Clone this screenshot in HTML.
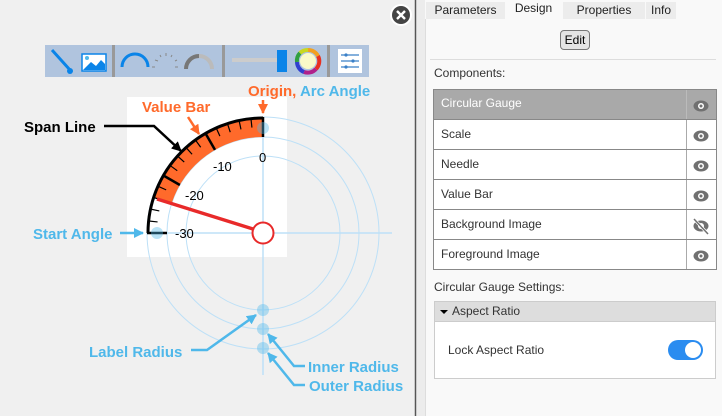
<!DOCTYPE html>
<html><head><meta charset="utf-8"><style>
*{margin:0;padding:0;box-sizing:border-box}
body{width:722px;height:416px;background:#f0f0f0;font-family:"Liberation Sans",Arial,sans-serif;position:relative;overflow:hidden}
.abs{position:absolute}
.tab{position:absolute;top:2px;height:17px;font-size:12px;color:#222;text-align:center;line-height:17px;background:#ececec}
.row{position:absolute;left:433px;width:284px;height:30px;border:1px solid #888;border-top:none;background:#fff;font-size:12px;color:#333}
.row span{position:absolute;left:7px;top:7px}
.row .e{position:absolute;left:252px;top:0;width:31px;height:29px;border-left:1px solid #aaa}
</style></head><body>
<svg class="abs" style="left:0;top:0" width="722" height="416">
<defs><marker id="ab" markerUnits="userSpaceOnUse" markerWidth="10" markerHeight="10" refX="9" refY="5" orient="auto"><path d="M0,0L10,5L0,10z" fill="#4fb8ea"/></marker>
<marker id="ao" markerUnits="userSpaceOnUse" markerWidth="10" markerHeight="10" refX="9" refY="5" orient="auto"><path d="M0,0L10,5L0,10z" fill="#ff6a2b"/></marker>
<marker id="ak" markerUnits="userSpaceOnUse" markerWidth="10" markerHeight="10" refX="9" refY="5" orient="auto"><path d="M0,0L10,5L0,10z" fill="#000"/></marker></defs>
<rect x="0" y="0" width="416" height="416" fill="#f0f0f0"/>
<line x1="415.5" y1="0" x2="415.5" y2="416" stroke="#555" stroke-width="1.5"/>
<rect x="417" y="0" width="8" height="416" fill="#ececec"/>
<rect x="425" y="0" width="297" height="416" fill="#f9f9f9"/>
<line x1="425.5" y1="19" x2="425.5" y2="416" stroke="#ddd"/>
<circle cx="401" cy="15" r="11" fill="#fff"/><circle cx="401" cy="15" r="9" fill="#444"/>
<path d="M397,11L405,19M405,11L397,19" stroke="#fff" stroke-width="2.4"/>
<rect x="45" y="45" width="324" height="32" fill="#b0c4de"/>
<rect x="112" y="45" width="3" height="32" fill="#999"/><rect x="222" y="45" width="3" height="32" fill="#999"/><rect x="327" y="45" width="3" height="32" fill="#999"/>
<path d="M52,50L70,70" stroke="#0a84e8" stroke-width="3"/><circle cx="70" cy="71" r="3" fill="#0a84e8"/>
<rect x="82" y="54" width="24" height="17" fill="#fff" stroke="#0a84e8" stroke-width="1.5"/><circle cx="87" cy="58" r="2" fill="#4fb8ea"/><path d="M83,70L91,62L96,66L101,60L105,64L105,70z" fill="#0a84e8"/>
<path d="M122,67A13,13 0 0 1 148,67" fill="none" stroke="#0a84e8" stroke-width="3"/>
<g stroke="#888" stroke-width="1"><path d="M152,67h3M155,60l3,1M160,55l1,2M166,53v3M172,55l-1,2M177,60l-2,1M178,67h-3"/></g>
<path d="M186,69A13,13 0 0 1 212,69" fill="none" stroke="#bbb" stroke-width="4"/><path d="M186,69A13,13 0 0 1 199,56" fill="none" stroke="#777" stroke-width="4"/>
<rect x="232" y="58" width="48" height="4" fill="#ccc"/><rect x="277" y="50" width="10" height="22" fill="#0a84e8"/>
<g stroke-width="4" fill="none"><path d="M308,50A11,11 0 0 1 318,56" stroke="#f3a020"/><path d="M318,56A11,11 0 0 1 316,69" stroke="#e83020"/><path d="M316,69A11,11 0 0 1 304,72" stroke="#b0208a"/><path d="M304,72A11,11 0 0 1 297,62" stroke="#3040d0"/><path d="M297,62A11,11 0 0 1 300,53" stroke="#30a040"/><path d="M300,53A11,11 0 0 1 308,50" stroke="#c8d820"/></g>
<circle cx="308" cy="61" r="8" fill="#fafac8"/>
<rect x="338" y="49" width="24" height="24" fill="#fff"/>
<g stroke="#3a80c8" stroke-width="1.3"><path d="M341,55h18M341,61h18M341,67h18"/></g><g fill="#3a80c8"><circle cx="346" cy="55" r="1.6"/><circle cx="353" cy="61" r="1.6"/><circle cx="346" cy="67" r="1.6"/></g>
<rect x="127" y="97" width="160" height="160" fill="#fff"/>
<g fill="none" stroke="#bde0f7" stroke-width="1"><circle cx="263" cy="233" r="116"/><circle cx="263" cy="233" r="96"/><circle cx="263" cy="233" r="77"/>
<path d="M147,233H392M263,117V375" stroke-width="1.5"/></g>
<path d="M152.7,197.2A116,116 0 0 1 263,117L263,137A96,96 0 0 0 171.7,203.3Z" fill="#ff6a2b"/>
<path d="M148,233A115,115 0 0 1 263,118" fill="none" stroke="#000" stroke-width="3"/>
<g stroke="#000" stroke-width="1.2">
<line x1="147" y1="233" x2="157" y2="233" transform="rotate(6 263 233)"/><line x1="147" y1="233" x2="157" y2="233" transform="rotate(12 263 233)"/><line x1="147" y1="233" x2="157" y2="233" transform="rotate(18 263 233)"/><line x1="147" y1="233" x2="157" y2="233" transform="rotate(24 263 233)"/>
<line x1="147" y1="233" x2="157" y2="233" transform="rotate(36 263 233)"/><line x1="147" y1="233" x2="157" y2="233" transform="rotate(42 263 233)"/><line x1="147" y1="233" x2="157" y2="233" transform="rotate(48 263 233)"/><line x1="147" y1="233" x2="157" y2="233" transform="rotate(54 263 233)"/>
<line x1="147" y1="233" x2="157" y2="233" transform="rotate(66 263 233)"/><line x1="147" y1="233" x2="157" y2="233" transform="rotate(72 263 233)"/><line x1="147" y1="233" x2="157" y2="233" transform="rotate(78 263 233)"/><line x1="147" y1="233" x2="157" y2="233" transform="rotate(84 263 233)"/>
</g>
<g stroke="#000" stroke-width="2.5">
<line x1="147" y1="233" x2="167" y2="233"/><line x1="147" y1="233" x2="167" y2="233" transform="rotate(30 263 233)"/><line x1="147" y1="233" x2="167" y2="233" transform="rotate(60 263 233)"/><line x1="147" y1="233" x2="167" y2="233" transform="rotate(90 263 233)"/></g>
<g fill="#4fb8ea" fill-opacity="0.4"><circle cx="263" cy="128" r="6"/><circle cx="157" cy="233" r="6"/><circle cx="263" cy="310" r="6"/><circle cx="263" cy="329" r="6"/><circle cx="263" cy="348" r="6"/></g>
<g font-size="13" fill="#000"><text x="259" y="162">0</text><text x="213" y="171">-10</text><text x="185" y="200">-20</text><text x="175" y="238">-30</text></g>
<line x1="157" y1="199" x2="253" y2="229" stroke="#e82a2a" stroke-width="3.5"/>
<circle cx="263" cy="233" r="10.5" fill="#fff" stroke="#e82a2a" stroke-width="2"/>
<g font-size="15" font-weight="bold">
<text x="248" y="96"><tspan fill="#ff6a2b">Origin,</tspan><tspan fill="#4fb8ea"> Arc Angle</tspan></text>
<text x="142" y="112" fill="#ff6a2b">Value Bar</text>
<text x="24" y="132" fill="#000">Span Line</text>
<text x="33" y="239" fill="#4fb8ea">Start Angle</text>
<text x="89" y="357" fill="#4fb8ea">Label Radius</text>
<text x="308" y="372" fill="#4fb8ea">Inner Radius</text>
<text x="309" y="391" fill="#4fb8ea">Outer Radius</text></g>
<g fill="none" stroke-width="2.5">
<path d="M263,100V113" stroke="#ff6a2b" marker-end="url(#ao)"/>
<path d="M188,117L199,134" stroke="#ff6a2b" marker-end="url(#ao)"/>
<path d="M104,126H154L181,151" stroke="#000" marker-end="url(#ak)"/>
<path d="M120,233H143" stroke="#4fb8ea" marker-end="url(#ab)"/>
<path d="M191,350H207L256,315" stroke="#4fb8ea" marker-end="url(#ab)"/>
<path d="M305,366H294L268,334" stroke="#4fb8ea" marker-end="url(#ab)"/>
<path d="M305,385H294L268,353" stroke="#4fb8ea" marker-end="url(#ab)"/>
</g>
<line x1="430" y1="59.5" x2="716" y2="59.5" stroke="#ddd"/>
</svg>
<div class="tab" style="left:426px;width:79px">Parameters</div>
<div class="tab" style="left:505px;width:57px;background:#f9f9f9;top:0;height:19px;line-height:17px">Design</div>
<div class="tab" style="left:563px;width:82px">Properties</div>
<div class="tab" style="left:646px;width:30px">Info</div>
<div class="abs" style="left:560px;top:30px;width:30px;height:20px;border:1px solid #777;border-radius:4px;background:#e4e4e4;font-size:12px;text-align:center;line-height:18px">Edit</div>
<div class="abs" style="left:434px;top:66px;font-size:12px;color:#333">Components:</div>
<div class="row" style="top:89px;height:31px;border-top:1px solid #888;background:#a9a9a9;color:#fff"><span style="top:6px">Circular Gauge</span><div class="e" style="border-left-color:#bbb"></div></div>
<div class="row" style="top:120px"><span>Scale</span><div class="e"></div></div>
<div class="row" style="top:150px"><span>Needle</span><div class="e"></div></div>
<div class="row" style="top:180px"><span>Value Bar</span><div class="e"></div></div>
<div class="row" style="top:210px"><span>Background Image</span><div class="e"></div></div>
<div class="row" style="top:240px"><span>Foreground Image</span><div class="e"></div></div>
<svg class="abs" style="left:690px;top:96px" width="24" height="170">
<g fill="#707070"><ellipse cx="11" cy="10" rx="7.5" ry="5.5"/><ellipse cx="11" cy="40" rx="7.5" ry="5.5"/><ellipse cx="11" cy="70" rx="7.5" ry="5.5"/><ellipse cx="11" cy="100" rx="7.5" ry="5.5"/><ellipse cx="11" cy="130" rx="7.5" ry="5.5"/><ellipse cx="11" cy="160" rx="7.5" ry="5.5"/></g>
<g fill="#fff"><circle cx="11" cy="10" r="3"/><circle cx="11" cy="40" r="3"/><circle cx="11" cy="70" r="3"/><circle cx="11" cy="100" r="3"/><circle cx="11" cy="130" r="3"/><circle cx="11" cy="160" r="3"/></g>
<g fill="#707070"><circle cx="11" cy="10" r="1.5"/><circle cx="11" cy="40" r="1.5"/><circle cx="11" cy="70" r="1.5"/><circle cx="11" cy="100" r="1.5"/><circle cx="11" cy="160" r="1.5"/></g>
<path d="M4,123L18,138" stroke="#fff" stroke-width="3"/><path d="M4,123L18,138" stroke="#707070" stroke-width="1.5"/>
</svg>
<div class="abs" style="left:434px;top:280px;font-size:12px;color:#333">Circular Gauge Settings:</div>
<div class="abs" style="left:434px;top:301px;width:282px;height:78px;border:1px solid #ccc;background:#fff"></div>
<div class="abs" style="left:435px;top:302px;width:280px;height:20px;background:#ddd;border-bottom:1px solid #ccc;font-size:12px;color:#333;line-height:19px;padding-left:17px">Aspect Ratio</div>
<div class="abs" style="left:440px;top:310px;width:0;height:0;border-left:4px solid transparent;border-right:4px solid transparent;border-top:4px solid #000"></div>
<div class="abs" style="left:448px;top:343px;font-size:12px;color:#333">Lock Aspect Ratio</div>
<div class="abs" style="left:668px;top:340px;width:35px;height:20px;border-radius:10px;background:#2a8cf0"></div>
<div class="abs" style="left:685px;top:342px;width:16px;height:16px;border-radius:8px;background:#fff"></div>
</body></html>
